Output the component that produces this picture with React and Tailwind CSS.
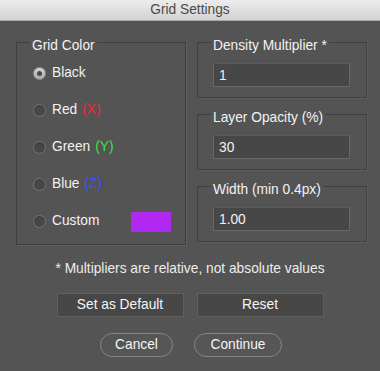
import { useState } from "react";

const COLORS = [
  { id: "black", label: "Black" },
  { id: "red", label: "Red", tag: "(X)", tagColor: "text-[#f0283a]" },
  { id: "green", label: "Green", tag: "(Y)", tagColor: "text-[#3fe04a]" },
  { id: "blue", label: "Blue", tag: "(Z)", tagColor: "text-[#3a4dff]" },
  { id: "custom", label: "Custom" },
];

function Radio({ checked }) {
  return checked ? (
    <span className="w-[13px] h-[13px] rounded-full bg-gradient-to-b from-[#d4d4d4] to-[#acacac] border border-[#909090] flex items-center justify-center shrink-0">
      <span className="w-[5px] h-[5px] rounded-full bg-[#4b4b4b]" />
    </span>
  ) : (
    <span className="w-[13px] h-[13px] rounded-full bg-[#474747] border border-[#757575] shadow-[inset_0_1px_1px_#3a3a3a] shrink-0" />
  );
}

function Group({ title, className, children }) {
  return (
    <fieldset className={`border border-[#3f3f3f] shadow-[1px_1px_0_#5e5e5e] ${className}`}>
      <legend className="ml-[13px] mr-auto px-[2px] pt-[8px] text-[13.75px] leading-[16px] text-[#f2f2f2]">
        {title}
      </legend>
      {children}
    </fieldset>
  );
}

function NumberField({ title, value }) {
  return (
    <Group title={title} className="w-[170px] pb-[10px]">
      <input
        defaultValue={value}
        className="block mt-[9px] ml-[15px] w-[137px] h-[24px] px-[5px] bg-[#474747] border border-[#686868] border-t-[#5a5a5a] text-[13.75px] text-[#f2f2f2] outline-none"
      />
    </Group>
  );
}

export default function App() {
  const [color, setColor] = useState("black");

  return (
    <div className="w-[380px] h-[371px] bg-[#545454] font-['Liberation_Sans',Arial,sans-serif] overflow-hidden">
      <div className="h-[21px] bg-gradient-to-b from-[#ececec] to-[#d3d3d3] border-b border-[#a8a8a8] flex items-center justify-center text-[13.75px] text-[#4a4a4a]">
        Grid Settings
      </div>

      <div className="flex items-start gap-[11px] pl-[16px] pt-[9px]">
        <Group title="Grid Color" className="w-[170px] pt-[1px] pb-[4px]">
          {COLORS.map((c) => (
            <div
              key={c.id}
              onClick={() => setColor(c.id)}
              className="h-[37px] flex items-center pl-[16px] pr-[14px] cursor-default"
            >
              <Radio checked={color === c.id} />
              <span className="ml-[6px] text-[13.75px] text-[#f2f2f2]">{c.label}</span>
              {c.tag && (
                <span className={`ml-[5px] text-[13.75px] ${c.tagColor}`}>{c.tag}</span>
              )}
              {c.id === "custom" && (
                <span className="ml-auto w-[40px] h-[20px] bg-[#b028f2]" />
              )}
            </div>
          ))}
        </Group>

        <div className="w-[170px] flex flex-col gap-[4px]">
          <NumberField title="Density Multiplier *" value="1" />
          <NumberField title="Layer Opacity (%)" value="30" />
          <NumberField title="Width (min 0.4px)" value="1.00" />
        </div>
      </div>

      <p className="mt-[16px] text-center text-[13.75px] leading-[16px] text-[#ececec]">
        * Multipliers are relative, not absolute values
      </p>

      <div className="mt-[16px] flex justify-center gap-[13px]">
        <button className="w-[127px] h-[24px] bg-[#474747] border border-[#5f5f5f] text-[13.75px] text-[#f5f5f5]">
          Set as Default
        </button>
        <button className="w-[127px] h-[24px] bg-[#474747] border border-[#5f5f5f] text-[13.75px] text-[#f5f5f5]">
          Reset
        </button>
      </div>

      <div className="mt-[16px] flex justify-center gap-[21px] pl-[2px]">
        <button className="w-[73px] h-[24px] rounded-full border border-[#858585] bg-[#565656] text-[13.75px] text-[#f5f5f5]">
          Cancel
        </button>
        <button className="w-[88px] h-[24px] rounded-full border border-[#858585] bg-[#565656] text-[13.75px] text-[#f5f5f5]">
          Continue
        </button>
      </div>
    </div>
  );
}
